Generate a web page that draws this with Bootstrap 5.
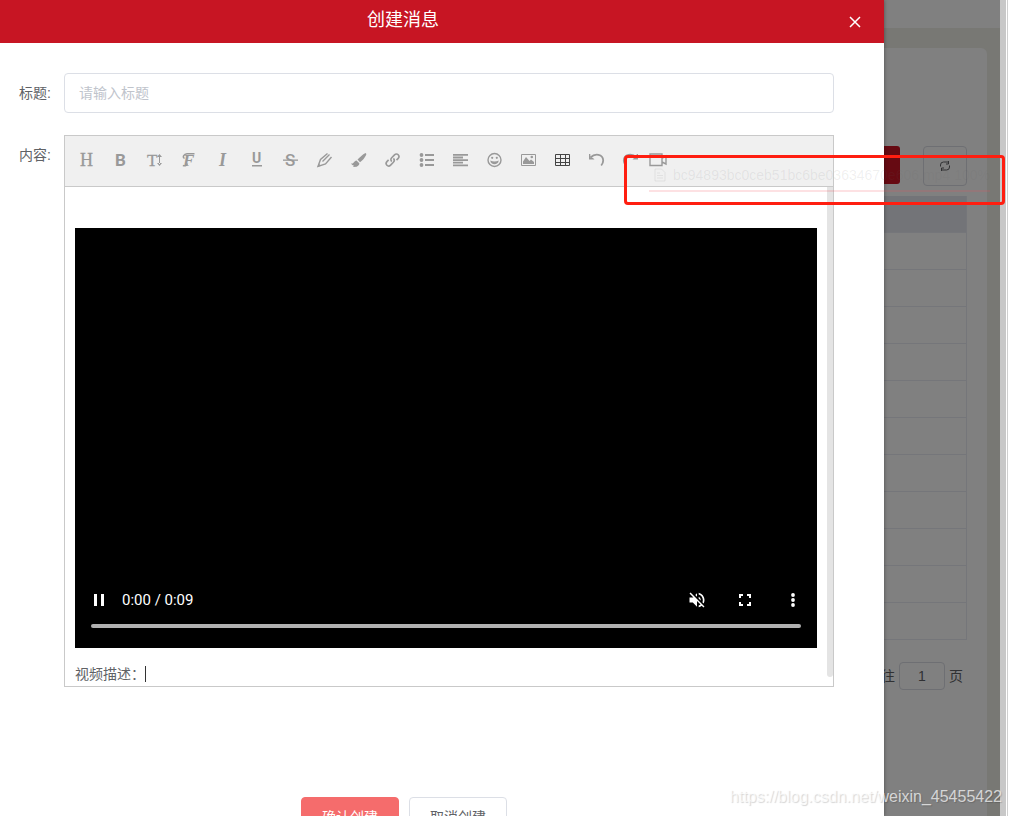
<!DOCTYPE html>
<html lang="zh-CN">
<head>
<meta charset="utf-8">
<meta name="viewport" content="width=device-width, initial-scale=1">
<title>创建消息</title>
<link href="https://cdn.jsdelivr.net/npm/bootstrap@5.3.0/dist/css/bootstrap.min.css" rel="stylesheet">
<style>
  body { font: 14px/20px "Liberation Sans", "Noto Sans CJK SC", sans-serif; color: #606266; background: #fff; }
  .drawer { min-width: 0; z-index: 1; box-shadow: 0 0 4px rgba(0,0,0,.4); }
  .drawer-head { height: 43px; background: #c71523; color: #fff; }
  .drawer-title { font-size: 18px; line-height: 40px; padding-right: 40px; }
  .close-btn { margin-right: 20px; }
  .drawer-body { padding: 30px 50px 0 0; }
  .field-label { width: 64px; padding-right: 13px; line-height: 40px; }
  .title-input { height: 40px; padding: 0 14px; font-size: 14px; border-color: #dcdfe6; border-radius: 4px; }
  .title-input::placeholder { color: #c0c4cc; }
  .title-row { margin-bottom: 22px; }
  .editor { border: 1px solid #c9c9c9; min-width: 0; }
  .tools { height: 51px; padding: 0 0 2px 5px; background: #f0f0f0; border-bottom: 1px solid #c9c9c9; }
  .tool { width: 34px; height: 48px; color: #999; }
  .tool.dark { color: #444; }
  .tool.last { width: 20px; }
  .tool svg, .ctl svg { display: block; fill: currentColor; }
  .tool svg .ln { fill: none; stroke: currentColor; }
  .serif { font-family: "Liberation Serif", serif; }
  .robo { font-family: Roboto, sans-serif; }
  .edit-area { padding: 41px 0 2px 10px; }
  .edit-main { min-width: 0; }
  .scroll-thumb { width: 6px; margin: -41px 0 7px 10px; background: #e4e4e4; border-radius: 0 0 3px 3px; }
  .video-box { height: 420px; background: #000; color: #fff; padding: 0 16px 20px; }
  .time { font: 15px/20px Roboto, sans-serif; margin-left: 15px; }
  .ctl { width: 16px; height: 20px; }
  .right-ctls { gap: 32px; }
  .seek { appearance: none; height: 4px; margin-top: 14px; border-radius: 2px; background: #b0b0b0; }
  .seek::-webkit-slider-thumb { appearance: none; width: 0; height: 4px; }
  .caption-line { margin-top: 16px; }
  .caret { width: 1px; height: 16px; background: #333; }
  .actions { gap: 10px; margin-top: 110px; padding-right: 26px; }
  .act { width: 98px; height: 40px; font-size: 14px; line-height: 36px; border-radius: 4px; color: #606266; border: 1px solid #dcdfe6; background: #fff; }
  .act.main { background: #f56c6c; border-color: #f56c6c; color: #fff; }

  .behind { width: 116px; background: #787874; color: #303133; }
  .topbar { height: 28px; background: #808080; }
  .panel { margin: 20px 13px 0 0; padding: 98px 20px 0 0; background: #808080; border-radius: 0 6px 0 0; }
  .panel-btns { height: 50px; }
  .red-btn { width: 16px; height: 38px; background: #660a12; border-radius: 0 3px 3px 0; }
  .refresh { width: 44px; height: 40px; border: 1px solid #6e6f73; border-radius: 4px; }
  .grid-table { border-collapse: separate; border-spacing: 0; }
  .grid-table th { background: #737478; }
  .grid-table th, .grid-table td { height: 37px; padding: 0; border-bottom: 1px solid #75767a; border-right: 1px solid #75767a; }
  .pager { margin: 22px -15px 0 -3px; gap: 4px; height: 28px; }
  .page-no { width: 46px; height: 28px; border: 1px solid #6e6f73; border-radius: 4px; background: transparent; color: #303133; }
  .page-scroll { width: 6px; background: #c8c8c8; }
  .edge { width: 6px; border-left: 1px solid #fff; }
  .edge i { border-left: 1px solid #d0d0d0; }

  .upload-tip { top: 155px; right: 7px; width: 381px; height: 50px; border: 3px solid #ff1e10; border-radius: 4px; padding: 7px 12px 0 22px; z-index: 2; color: rgba(96,98,102,.1); }
  .upload-tip .rule { height: 2px; margin-top: 5px; background: rgba(245,80,90,.17); }
  .upload-tip svg { margin: 0 7px 0 5px; }
  .watermark { right: 10px; bottom: 9px; z-index: 2; font-size: 16px; color: rgba(255,255,255,.7); text-shadow: 1px 1px 1px rgba(0,0,0,.17); }
</style>
</head>
<body class="d-flex vh-100 overflow-hidden position-relative">
<main class="drawer flex-grow-1 bg-white">
  <header class="drawer-head d-flex align-items-center">
    <h1 class="drawer-title flex-grow-1 text-center fw-normal m-0 align-self-start">创建消息</h1>
    <button class="close-btn btn p-0 border-0 text-white" aria-label="关闭">
      <svg width="18" height="18" viewBox="0 0 18 18" class="d-block" fill="none" stroke="currentColor" stroke-width="1.500"><path d="M4 4l10 10M14 4L4 14"/></svg>
    </button>
  </header>
  <form class="drawer-body">
    <div class="title-row d-flex">
      <label class="field-label text-end flex-shrink-0" for="title">标题:</label>
      <input class="title-input form-control" id="title" type="text" placeholder="请输入标题">
    </div>
    <div class="d-flex">
      <span class="field-label text-end flex-shrink-0">内容:</span>
      <div class="editor flex-grow-1">
        <div class="tools d-flex align-items-center">
          <button type="button" class="tool btn p-0 border-0 d-flex align-items-center justify-content-center" aria-label="标题"><svg width="18" height="18"><text class="serif" x="2" y="15" font-size="18" stroke="currentColor" stroke-width=".3">H</text></svg></button>
          <button type="button" class="tool btn p-0 border-0 d-flex align-items-center justify-content-center" aria-label="粗体"><svg width="18" height="18"><text class="robo" x="3" y="15" font-size="17" font-weight="700">B</text></svg></button>
          <button type="button" class="tool btn p-0 border-0 d-flex align-items-center justify-content-center" aria-label="字号"><svg width="18" height="18"><text class="serif" x="1" y="15" font-size="17" stroke="currentColor" stroke-width=".3">T</text><path d="M13 5h1v8h-1zM11 6l2.500-3 2.500 3zM11 12l2.500 3 2.500-3z"/></svg></button>
          <button type="button" class="tool btn p-0 border-0 d-flex align-items-center justify-content-center" aria-label="字体"><svg width="18" height="18"><path class="ln" stroke-width="1.400" d="M4.500 7.500C2 6 4 3 7 2.700h7.500M3 14.500c2 1 4 0 4.500-2"/><text class="serif" x="3" y="15" font-size="17" font-weight="700" font-style="italic">F</text></svg></button>
          <button type="button" class="tool btn p-0 border-0 d-flex align-items-center justify-content-center" aria-label="斜体"><svg width="18" height="18"><text class="serif" x="5" y="15" font-size="18" font-weight="700" font-style="italic">I</text></svg></button>
          <button type="button" class="tool btn p-0 border-0 d-flex align-items-center justify-content-center" aria-label="下划线"><svg width="18" height="18"><text class="robo" x="4" y="12" font-size="14" font-weight="700">U</text><path d="M4 14h10v1.500H4z"/></svg></button>
          <button type="button" class="tool btn p-0 border-0 d-flex align-items-center justify-content-center" aria-label="删除线"><svg width="18" height="18"><text class="robo" x="3" y="15" font-size="17" font-weight="500">S</text><path d="M1 8.500h15v1.300H1z"/></svg></button>
          <button type="button" class="tool btn p-0 border-0 d-flex align-items-center justify-content-center" aria-label="文字颜色"><svg width="18" height="18"><path class="ln" stroke-width="1.400" d="M11.500 2.500L4.500 8.500L2 15.500L9.500 13L15.500 6M13.500 3.500L6.500 10.500"/><path d="M1.500 16l1.200-3.500 2.300 2.300z"/></svg></button>
          <button type="button" class="tool btn p-0 border-0 d-flex align-items-center justify-content-center" aria-label="背景色"><svg width="18" height="18"><path d="M15.500 2c1 .5 1 1.200.5 2.200-1.500 3-3.500 5.300-6 7L7.500 8.500C10 6 12.500 3.500 15.500 2zM6.500 9.500l2.800 2.800c.2 2.500-3.300 4.700-6.500 3.200L4 14.500c-1 .2-2.200-.8-3-2h1.500c1 0 1.500-2.500 4-3z"/></svg></button>
          <button type="button" class="tool btn p-0 border-0 d-flex align-items-center justify-content-center" aria-label="链接"><svg width="18" height="18"><path class="ln" stroke-width="1.600" d="M7.700 10.600c-1.200-1.200-1-2.800 0-3.800l2.800-2.900c1.200-1.200 2.800-1 3.700-.1 1 1 1 2.500 0 3.600l-1.700 1.700M9.400 7.400c1.200 1.200 1 2.800 0 3.800l-2.800 2.900c-1.200 1.200-2.800 1-3.700.1-1-1-1-2.500 0-3.600l1.700-1.700"/></svg></button>
          <button type="button" class="tool btn p-0 border-0 d-flex align-items-center justify-content-center" aria-label="列表"><svg width="18" height="18"><circle cx="3.500" cy="4" r="1.900"/><circle cx="3.500" cy="9" r="1.900"/><circle cx="3.500" cy="14" r="1.900"/><path d="M7 3h9v2H7zM7 8h9v2H7zM7 13h9v2H7z"/></svg></button>
          <button type="button" class="tool btn p-0 border-0 d-flex align-items-center justify-content-center" aria-label="对齐"><svg width="18" height="18"><path d="M1 3h15v1.800H1zM1 5.600h10v1.800H1zM1 8.200h15v1.800H1zM1 10.800h10v1.800H1zM1 13.400h15v1.800H1z"/></svg></button>
          <button type="button" class="tool btn p-0 border-0 d-flex align-items-center justify-content-center" aria-label="表情"><svg width="18" height="18"><circle class="ln" cx="8.500" cy="9" r="6.500" stroke-width="1.400"/><circle cx="6.200" cy="6.800" r="1.100"/><circle cx="10.800" cy="6.800" r="1.100"/><path d="M4.300 9.500c2.700 1.300 5.700 1.300 8.400 0-.3 5-8.100 5-8.400 0z"/></svg></button>
          <button type="button" class="tool btn p-0 border-0 d-flex align-items-center justify-content-center" aria-label="图片"><svg width="18" height="18"><path class="ln" d="M1.500 3.500h14v11h-14z"/><path d="M3 13v-2.500L6 6l3.500 4L11 8.500l3 2.500v2z"/><circle cx="11.800" cy="6" r="1.300"/></svg></button>
          <button type="button" class="tool dark btn p-0 border-0 d-flex align-items-center justify-content-center" aria-label="表格"><svg width="18" height="18"><path class="ln" d="M1.500 3.500h14v11h-14zM1.500 7.500h14M1.500 11.500h14M6.500 3.500v11M11.500 3.500v11"/></svg></button>
          <button type="button" class="tool btn p-0 border-0 d-flex align-items-center justify-content-center" aria-label="撤销"><svg width="18" height="18"><path class="ln" stroke-width="1.800" d="M2.500 6.500C7 2 15 3 15.200 9.500c0 2-.7 3.500-2 5"/><path d="M1 3v5.500h5.500L5 7 2.500 6.500 2.300 3z"/></svg></button>
          <button type="button" class="tool btn p-0 border-0 d-flex align-items-center justify-content-center" aria-label="重做"><svg width="18" height="18"><path class="ln" stroke-width="1.800" d="M14.500 6.500C10 2 2 3 1.800 9.500c0 2 .7 3.500 2 5"/><path d="M16 3v5.500h-5.500L12 7l2.500-.5.200-3.500z"/></svg></button>
          <button type="button" class="tool last btn p-0 border-0 d-flex align-items-center justify-content-center" aria-label="视频"><svg width="20" height="18"><path class="ln" stroke-width="1.400" d="M2 3h12v11.500H2zM14 7.500l4-2.500v8l-4-2"/></svg></button>
        </div>
        <div class="edit-area d-flex">
          <div class="edit-main flex-grow-1">
            <div class="video-box d-flex flex-column justify-content-end">
              <div class="d-flex align-items-center">
                <button type="button" class="ctl btn p-0 border-0 text-white" aria-label="暂停"><svg width="16" height="20"><path d="M3 4h3v12H3zM10 4h3v12h-3z"/></svg></button>
                <span class="time flex-grow-1">0:00 / 0:09</span>
                <div class="right-ctls d-flex">
                  <button type="button" class="ctl btn p-0 border-0 text-white" aria-label="取消静音"><svg width="16" height="20" viewBox="3 0 18 24"><path d="M16.500 12A4.500 4.500 0 0 0 14 7.970v2.210l2.450 2.450c.03-.2.050-.41.050-.63zm2.500 0c0 .94-.2 1.820-.54 2.640l1.510 1.510A8.800 8.800 0 0 0 21 12c0-4.280-2.990-7.860-7-8.770v2.060c2.890.86 5 3.540 5 6.710zM4.270 3L3 4.270 7.730 9H3v6h4l5 5v-6.730l4.250 4.250c-.67.520-1.420.93-2.250 1.180v2.060a9 9 0 0 0 3.690-1.810L19.730 21 21 19.730l-9-9L4.270 3zM12 4L9.910 6.090 12 8.180V4z"/></svg></button>
                  <button type="button" class="ctl btn p-0 border-0 text-white" aria-label="全屏"><svg width="16" height="20"><path d="M2 4h4v2H4v2H2zM10 4h4v4h-2V6h-2zM2 12h2v2h2v2H2zM12 12h2v4h-4v-2h2z"/></svg></button>
                  <button type="button" class="ctl btn p-0 border-0 text-white" aria-label="更多"><svg width="16" height="20"><circle cx="8" cy="5" r="1.900"/><circle cx="8" cy="10" r="1.900"/><circle cx="8" cy="15" r="1.900"/></svg></button>
                </div>
              </div>
              <input class="seek w-100" type="range" value="0" aria-label="播放进度">
            </div>
            <div class="caption-line d-flex align-items-center"><span>视频描述：</span><span class="caret"></span></div>
          </div>
          <div class="scroll-thumb flex-shrink-0"></div>
        </div>
      </div>
    </div>
    <div class="actions d-flex justify-content-center">
      <button type="button" class="act main btn p-0">确认创建</button>
      <button type="button" class="act btn p-0">取消创建</button>
    </div>
  </form>
</main>

<aside class="behind d-flex flex-column flex-shrink-0 overflow-hidden">
  <div class="topbar flex-shrink-0"></div>
  <div class="panel flex-grow-1">
    <div class="panel-btns d-flex justify-content-between align-items-start">
      <div class="red-btn"></div>
      <button class="refresh btn p-0 d-flex align-items-center justify-content-center" aria-label="刷新"><svg width="12" height="12" fill="none" stroke="#303133"><path d="M1.500 6.500V5a3 3 0 0 1 3-3H9M10.500 5.500V7a3 3 0 0 1-3 3H3M9.500 1v3H7M2.500 11V8H5"/></svg></button>
    </div>
    <table class="grid-table w-100">
      <thead><tr><th></th></tr></thead>
      <tbody>
        <tr><td></td></tr><tr><td></td></tr><tr><td></td></tr><tr><td></td></tr>
        <tr><td></td></tr><tr><td></td></tr><tr><td></td></tr><tr><td></td></tr>
        <tr><td></td></tr><tr><td></td></tr><tr><td></td></tr>
      </tbody>
    </table>
    <div class="pager d-flex align-items-center">
      <label for="pageno">往</label><input class="page-no text-center p-0" id="pageno" type="text" value="1"><span>页</span>
    </div>
  </div>
</aside>
<div class="page-scroll flex-shrink-0"></div>
<div class="edge d-flex flex-shrink-0"><i></i></div>

<div class="upload-tip position-absolute">
  <div class="d-flex align-items-center">
    <svg width="12" height="14" class="flex-shrink-0" fill="none" stroke="currentColor"><path d="M1 1h6.500L11 4.500V13H1zM3 5h3M3 7.500h6M3 10h6"/></svg>
    <span class="flex-grow-1">bc94893bc0ceb51bc6be03634670e606.mp4</span><span>100%</span>
  </div>
  <div class="rule"></div>
</div>
<div class="watermark position-absolute">https://blog.csdn.net/weixin_45455422</div>
<script src="https://cdn.jsdelivr.net/npm/bootstrap@5.3.0/dist/js/bootstrap.bundle.min.js"></script>
</body>
</html>
